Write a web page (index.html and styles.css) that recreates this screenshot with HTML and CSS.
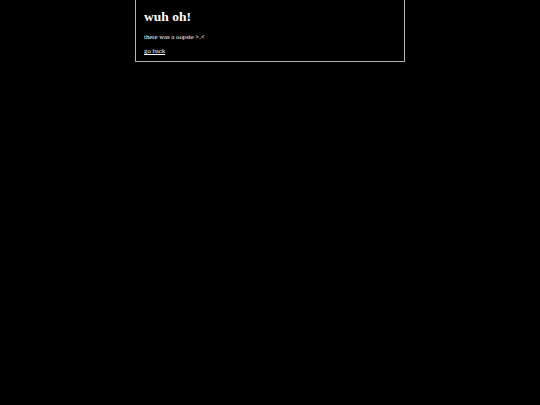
FILE: index.html
```html
<!DOCTYPE html>
<html>
<head>
<meta charset="utf-8">
<link rel="stylesheet" href="styles.css">
<title>wuh oh!</title>
</head>
<body>
<main class="card">
  <h1 class="title">wuh oh!</h1>
  <p class="message">there was a oopsie &gt;.&lt;</p>
  <p class="actions"><a class="back" href="#">go back</a></p>
</main>
</body>
</html>
```
FILE: styles.css
```css
html, body {
  margin: 0;
  background: #000;
  color: #fff;
  font-family: "Liberation Serif", "Times New Roman", serif;
}

.card {
  box-sizing: border-box;
  width: 270px;
  margin: 0 auto;
  padding: 8px 8px 6px;
  border: 1px solid #b4b4b4;
  border-top: none;
}

.title {
  margin: 0;
  font-size: 13.5px;
  line-height: 17px;
  font-weight: bold;
}

.message {
  margin: 7px 0 0;
  font-size: 6.75px;
  line-height: 9px;
}

.actions {
  margin: 5px 0 0;
  font-size: 6.75px;
  line-height: 9px;
}

.back {
  color: #fff;
}
```
